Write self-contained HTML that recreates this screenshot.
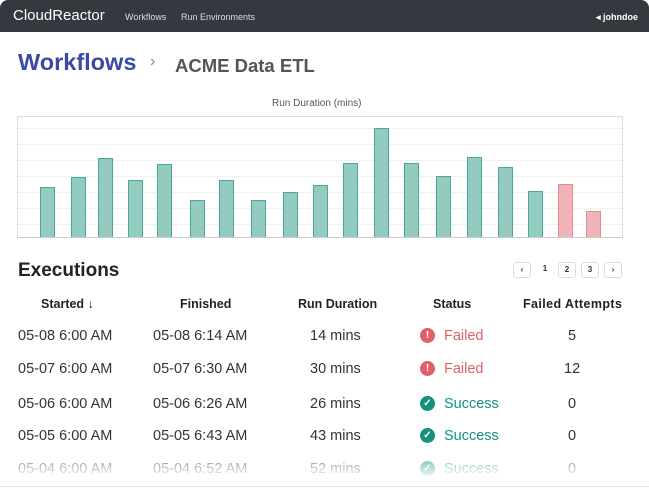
<!DOCTYPE html>
<html><head><meta charset="utf-8"><style>
*{margin:0;padding:0;box-sizing:border-box}
body{width:649px;height:489px;overflow:hidden;background:#fff;font-family:"Liberation Sans",sans-serif;position:relative}
.nav{position:absolute;left:0;top:0;width:649px;height:32px;background:#35383e;color:#fff;border-radius:8px 8px 0 0}
.nav .logo{position:absolute;left:13px;top:7px;font-size:15px}
.nav .l{position:absolute;top:12px;font-size:9px;color:#ddd}
.t{position:absolute;white-space:nowrap}
.bar{position:absolute;width:15px;background:#93cbc1;border:1.5px solid #4aa89a;border-bottom:none}
.bar.r{background:#f0b3b7;border-color:#e68a90}
.grid{position:absolute;left:18px;width:604px;height:1px;background:#f1f1f1}
.row{font-size:14.5px;color:#333}
.hd{font-size:12.5px;color:#222;font-weight:bold;line-height:15px}
.pg{position:absolute;top:262px;width:18px;height:16px;border:1px solid #ddd;border-radius:3px;font-size:8px;text-align:center;line-height:14px;color:#333;font-weight:bold}
.ic{position:absolute;width:15px;height:15px;border-radius:50%;color:#fff;font-size:10px;font-weight:bold;text-align:center;line-height:15px}
</style></head><body>
<div class="nav"><span class="logo">CloudReactor</span><span class="l" style="left:125px">Workflows</span><span class="l" style="left:181px">Run Environments</span><span class="l" style="left:596px;color:#fff;font-weight:bold">◂ johndoe</span></div>
<div class="t" style="left:18px;top:49px;font-size:23.5px;color:#3a4aa8;font-weight:bold">Workflows</div>
<div class="t" style="left:150px;top:53px;font-size:16px;color:#888">›</div>
<div class="t" style="left:175px;top:55px;font-size:18.5px;color:#555;font-weight:bold">ACME Data ETL</div>
<div class="t" style="left:272px;top:98px;font-size:10px;color:#555">Run Duration (mins)</div>
<div style="position:absolute;left:17px;top:116px;width:606px;height:122px;border:1px solid #ddd;border-bottom:1.5px solid #ccc"></div>
<div class="grid" style="top:128px"></div><div class="grid" style="top:144px"></div><div class="grid" style="top:160px"></div><div class="grid" style="top:176px"></div><div class="grid" style="top:192px"></div><div class="grid" style="top:208px"></div><div class="grid" style="top:224px"></div>
<div class="bar" style="left:40px;top:187px;height:50px"></div>
<div class="bar" style="left:71px;top:177px;height:60px"></div>
<div class="bar" style="left:98px;top:158px;height:79px"></div>
<div class="bar" style="left:128px;top:180px;height:57px"></div>
<div class="bar" style="left:157px;top:164px;height:73px"></div>
<div class="bar" style="left:190px;top:200px;height:37px"></div>
<div class="bar" style="left:219px;top:180px;height:57px"></div>
<div class="bar" style="left:251px;top:200px;height:37px"></div>
<div class="bar" style="left:283px;top:192px;height:45px"></div>
<div class="bar" style="left:313px;top:185px;height:52px"></div>
<div class="bar" style="left:343px;top:163px;height:74px"></div>
<div class="bar" style="left:374px;top:128px;height:109px"></div>
<div class="bar" style="left:404px;top:163px;height:74px"></div>
<div class="bar" style="left:436px;top:176px;height:61px"></div>
<div class="bar" style="left:467px;top:157px;height:80px"></div>
<div class="bar" style="left:498px;top:167px;height:70px"></div>
<div class="bar" style="left:528px;top:191px;height:46px"></div>
<div class="bar r" style="left:558px;top:184px;height:53px"></div>
<div class="bar r" style="left:586px;top:211px;height:26px"></div>
<div class="t" style="left:18px;top:260px;font-size:19px;color:#222;font-weight:bold">Executions</div>
<div class="pg" style="left:513px">‹</div><div class="pg" style="left:536px;border:none">1</div><div class="pg" style="left:558px">2</div><div class="pg" style="left:581px">3</div><div class="pg" style="left:604px">›</div>
<div class="t hd" style="left:41px;top:297px">Started ↓</div>
<div class="t hd" style="left:180px;top:297px">Finished</div>
<div class="t hd" style="left:298px;top:297px">Run Duration</div>
<div class="t hd" style="left:433px;top:297px">Status</div>
<div class="t hd" style="left:523px;top:297px;letter-spacing:0.4px">Failed Attempts</div>
<div class="t row" style="left:18px;top:328px">05-08 6:00 AM</div><div class="t row" style="left:153px;top:328px">05-08 6:14 AM</div><div class="t row" style="left:310px;top:328px">14 mins</div><div class="ic" style="left:420px;top:328px;background:#e0606a">!</div><div class="t row" style="left:444px;top:328px;color:#e0606a">Failed</div><div class="t row" style="left:568px;top:328px">5</div>
<div class="t row" style="left:18px;top:361px">05-07 6:00 AM</div><div class="t row" style="left:153px;top:361px">05-07 6:30 AM</div><div class="t row" style="left:310px;top:361px">30 mins</div><div class="ic" style="left:420px;top:361px;background:#e0606a">!</div><div class="t row" style="left:444px;top:361px;color:#e0606a">Failed</div><div class="t row" style="left:564px;top:361px">12</div>
<div class="t row" style="left:18px;top:396px">05-06 6:00 AM</div><div class="t row" style="left:153px;top:396px">05-06 6:26 AM</div><div class="t row" style="left:310px;top:396px">26 mins</div><div class="ic" style="left:420px;top:396px;background:#14907e">✓</div><div class="t row" style="left:444px;top:396px;color:#14907e">Success</div><div class="t row" style="left:568px;top:396px">0</div>
<div class="t row" style="left:18px;top:428px">05-05 6:00 AM</div><div class="t row" style="left:153px;top:428px">05-05 6:43 AM</div><div class="t row" style="left:310px;top:428px">43 mins</div><div class="ic" style="left:420px;top:428px;background:#14907e">✓</div><div class="t row" style="left:444px;top:428px;color:#14907e">Success</div><div class="t row" style="left:568px;top:428px">0</div>
<div class="t row" style="left:18px;top:461px">05-04 6:00 AM</div><div class="t row" style="left:153px;top:461px">05-04 6:52 AM</div><div class="t row" style="left:310px;top:461px">52 mins</div><div class="ic" style="left:420px;top:461px;background:#14907e">✓</div><div class="t row" style="left:444px;top:461px;color:#14907e">Success</div><div class="t row" style="left:568px;top:461px">0</div>
<div style="position:absolute;left:0;top:440px;width:649px;height:49px;background:linear-gradient(rgba(255,255,255,0),rgba(255,255,255,0.5) 40%,#fff 80%)"></div>
<div style="position:absolute;left:0;top:486px;width:649px;height:3px;border-top:1px solid #e4e4e4"></div>
</body></html>
